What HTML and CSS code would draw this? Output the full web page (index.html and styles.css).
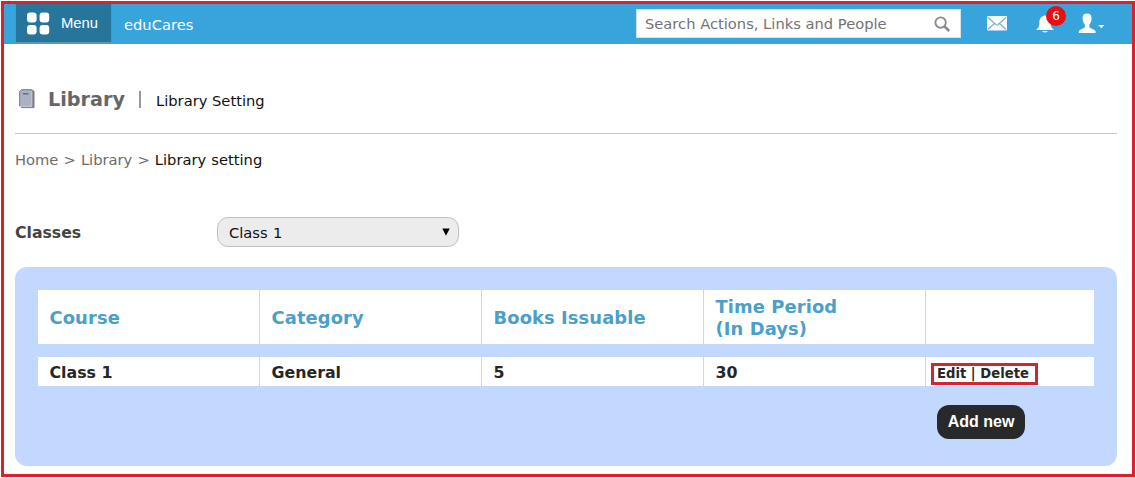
FILE: index.html
```
<!DOCTYPE html>
<html lang="en">
<head>
<meta charset="utf-8">
<title>Library Setting</title>
<link rel="stylesheet" href="styles.css">
</head>
<body>
<div class="page">
  <header class="topbar">
    <button class="menu-btn">
      <svg class="grid-icon" width="24" height="24" viewBox="0 0 24 24" fill="#fff"><rect x="0" y="0.5" width="9.6" height="10" rx="3"/><rect x="12.6" y="0.5" width="9.6" height="10" rx="3"/><rect x="0" y="13" width="9.6" height="9.5" rx="3"/><rect x="12.6" y="13" width="9.6" height="9.5" rx="3"/></svg>
      <span class="menu-label">Menu</span>
    </button>
    <span class="brand">eduCares</span>
    <div class="search">
      <span>Search Actions, Links and People</span>
      <svg width="17" height="17" viewBox="0 0 17 17" fill="none" stroke="#8b8b8b"><circle cx="6.6" cy="6.6" r="5.2" stroke-width="1.9"/><path d="M10.6 10.6L15.2 15" stroke-width="2.8"/></svg>
    </div>
    <svg class="mail" width="20" height="15" viewBox="0 0 20 15"><rect width="20" height="14.5" rx="1" fill="#f8fcfd"/><path d="M1 1.5L9 8.6Q10 9.4 11 8.6L19 1.5M1.2 13.2L7.3 7.6M18.8 13.2L12.7 7.6" fill="none" stroke="#7fa9bd" stroke-width="1.2"/></svg>
    <div class="bell">
      <svg width="18" height="18" viewBox="0 0 18 18" fill="#fff"><path d="M9 0.5C5.2 1 3.4 3.7 3.4 7.2C3.4 11.5 2.5 12.8 0.5 14.2V15.1H17.5V14.2C15.5 12.8 14.6 11.5 14.6 7.2C14.6 3.7 12.8 1 9 0.5ZM6 16H12Q11.4 17.4 9 17.4Q6.6 17.4 6 16Z"/></svg>
      <span class="badge">6</span>
    </div>
    <div class="user">
      <svg width="27" height="21" viewBox="0 0 27 21" fill="#fff"><path d="M9 0.6C5.9 0.6 4.4 2.6 4.6 5.5C4.7 8.3 5.5 10.3 6.8 11.5V14.2C6.5 15.5 1.2 16 0.8 18.4V20H17.6V18.4C17.2 16 11.7 15.5 11.4 14.2V11.5C12.7 10.3 13.4 8.3 13.5 5.5C13.7 2.6 12.2 0.6 9 0.6Z"/><path d="M20.3 12H26.3L23.3 15.2Z"/></svg>
    </div>
  </header>
  <main class="content">
    <div class="title-row">
      <svg class="book" width="16" height="20" viewBox="0 0 16 20"><path d="M2.5 0.7H12.3L15 2.2V18.6H3L0.7 17V2.2Z" fill="#777d8b" stroke="#7b7d86" stroke-width="1"/><rect x="1.2" y="1.2" width="11.2" height="15.9" rx="1" fill="#a9b1c3"/><path d="M1 17.3H12.8V1.8" fill="none" stroke="#d5d8df" stroke-width="1"/><path d="M4 4.8H9.5" stroke="#656c7b" stroke-width="1.5"/></svg>
      <h1 class="title">Library</h1>
      <span class="bar"></span>
      <span class="subtitle">Library Setting</span>
    </div>
    <nav class="crumbs">Home &gt; Library &gt; <span class="current">Library setting</span></nav>
    <div class="filter">
      <span class="filter-label">Classes</span>
      <div class="select"><span>Class 1</span><svg width="8" height="8" viewBox="0 0 8 8"><path d="M0.3 0.5H7.7L4 7.7Z"/></svg></div>
    </div>
    <section class="panel">
      <div class="row head"><div>Course</div><div>Category</div><div>Books Issuable</div><div>Time Period<br>(In Days)</div><div></div></div>
      <div class="row data"><div>Class 1</div><div>General</div><div>5</div><div>30</div><div class="actions"><span class="links">Edit | Delete</span></div></div>
      <button class="add">Add new</button>
    </section>
  </main>
</div>
</body>
</html>
```
FILE: styles.css
```
* { box-sizing: border-box; }
body { margin: 0; background: #fff; font-family: "DejaVu Sans", Verdana, sans-serif; font-size: 14.7px; color: #111; }
.page { width: 1134px; height: 476px; margin: 1px 0 0 1px; border: 3px solid #d9222d; overflow: hidden; }
.topbar { height: 40px; display: flex; align-items: flex-start; background: #38a4dc; color: #fff; }
.topbar > * { flex-shrink: 0; }
.menu-btn { width: 97px; height: 39px; margin-left: 11px; padding: 0 0 0 11px; border: 1px solid #5794b5; border-top: 0; background: #28759b; color: #fff; display: flex; align-items: flex-start; gap: 10px; }
.grid-icon { margin-top: 8px; flex-shrink: 0; }
.menu-label { font: 14.8px/18px "Liberation Sans", Arial, sans-serif; margin-top: 10px; }
.brand { width: 521px; padding-left: 12px; line-height: 18px; margin-top: 12px; }
.search { width: 325px; height: 29px; margin: 5px 0 0 -1px; margin-left: 3px; padding: 0 9px 0 8px; border: 1px solid #d3e3eb; background: #fff; color: #737373; display: flex; align-items: center; justify-content: space-between; }
.search svg { margin-top: 1px; }
.mail { margin: 12px 0 0 26px; }
.bell { position: relative; width: 18px; height: 18px; margin: 11px 0 0 29px; }
.badge { position: absolute; left: 10px; top: -9px; width: 20px; height: 20px; border-radius: 50%; background: #e80e12; color: #fff; font-size: 12px; line-height: 20px; text-align: center; }
.user { margin: 9px 0 0 24px; }
.content { padding: 0 15px 0 11px; }
.title-row { height: 90px; border-bottom: 1px solid #c6c6c9; display: flex; align-items: flex-start; }
.book { margin: 45px 0 0 4px; }
.title { margin: 44px 0 0 13px; font-size: 19.2px; line-height: 24px; color: #666; width: 77px; white-space: nowrap; }
.bar { width: 2px; height: 17px; background: #999; margin: 47px 0 0 14px; }
.subtitle { margin: 48px 0 0 15px; line-height: 18px; }
.crumbs { margin-top: 17px; line-height: 18px; color: #6c6c6c; word-spacing: 0.45px; }
.current { color: #111; }
.filter { margin-top: 48px; height: 30px; display: flex; align-items: center; }
.filter-label { width: 202px; font-weight: bold; font-size: 15.7px; color: #444; }
.select { width: 242px; height: 30px; border: 1px solid #c0c0c0; border-radius: 11px; background: #ececec; display: flex; align-items: center; justify-content: space-between; padding: 0 8px 0 11px; word-spacing: 0.8px; }
.select svg { margin-bottom: 1px; }
.panel { margin-top: 20px; height: 199px; padding: 23px; border-radius: 12px; background: #c3d8ff; }
.row { display: grid; grid-template-columns: repeat(4, 222px) 168px; background: #fff; font-weight: bold; align-items: stretch; }
.row > div { display: flex; align-items: center; padding: 2px 0 0 11.5px; border-right: 1px solid #c7d9ec; }
.row > div:last-child { border-right: 0; }
.head { height: 54px; font-size: 17.9px; line-height: 22px; color: #4b9fc8; letter-spacing: 0.1px; }
.data { height: 29px; margin-top: 13px; font-size: 15.8px; color: #262626; }
.data > .actions { padding: 4px 0 0 5px; }
.links { width: 107px; height: 22px; border: 3px solid #d02632; padding-left: 3px; font-size: 13.2px; line-height: 16px; white-space: nowrap; }
.add { display: block; width: 88px; height: 34px; margin: 19px 0 0 899px; padding: 0; border: 0; border-radius: 12px; background: #27292b; color: #fff; font: bold 16px "Liberation Sans", Arial, sans-serif; }
```
